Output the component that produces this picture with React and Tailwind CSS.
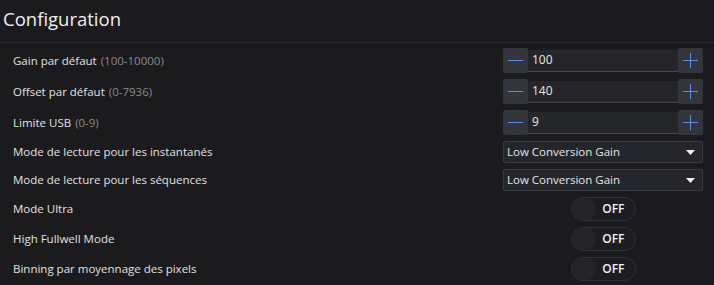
import React from "react";

const rows = [
  { label: "Gain par défaut", hint: "(100-10000)", value: "100" },
  { label: "Offset par défaut", hint: "(0-7936)", value: "140" },
  { label: "Limite USB", hint: "(0-9)", value: "9" },
];

const selects = [
  { label: "Mode de lecture pour les instantanés", value: "Low Conversion Gain" },
  { label: "Mode de lecture pour les séquences", value: "Low Conversion Gain" },
];

const toggles = ["Mode Ultra", "High Fullwell Mode", "Binning par moyennage des pixels"];

const Stepper = ({ value }) => (
  <div className="flex items-center w-[200px] h-[25px]">
    <button className="w-[25px] h-[25px] bg-[#33353c] rounded-[2px] flex items-center justify-center">
      <svg width="17" height="17" viewBox="0 0 17 17">
        <rect x="1" y="8" width="15" height="1" fill="#5b8de6" />
      </svg>
    </button>
    <div className="flex-1 h-[22px] bg-[#25262a] border-b border-[#45464c] flex items-center px-[4px] text-[12px] text-[#e8e8e8]">
      {value}
    </div>
    <button className="w-[25px] h-[25px] bg-[#33353c] rounded-[2px] flex items-center justify-center">
      <svg width="17" height="17" viewBox="0 0 17 17">
        <rect x="1" y="8" width="15" height="1" fill="#5b8de6" />
        <rect x="8" y="1" width="1" height="15" fill="#5b8de6" />
      </svg>
    </button>
  </div>
);

const Select = ({ value }) => (
  <div className="w-[200px] h-[22px] bg-[#25262b] border border-[#393a40] rounded-[2px] flex items-center justify-between pl-[3px] pr-[7px] text-[11.5px] text-[#e6e6e6]">
    <span>{value}</span>
    <svg width="9" height="5" viewBox="0 0 9 5">
      <path d="M0 0h9L4.5 5z" fill="#f0f0f0" />
    </svg>
  </div>
);

const Toggle = () => (
  <div className="w-[65px] h-[24px] rounded-full border border-[#2f3035] bg-[#1c1d20] flex items-center justify-between pr-[10px]">
    <div className="w-[24px] h-[22px] rounded-full bg-[#232428]" />
    <span className="text-[12px] font-semibold text-[#f2f2f2]">OFF</span>
  </div>
);

export default function App() {
  return (
    <div
      className="w-[714px] h-[285px] bg-[#1b1b1d] text-[#e2e2e2] overflow-hidden"
      style={{ fontFamily: '"Open Sans", "Noto Sans", sans-serif' }}
    >
      <div className="h-[43px] flex items-center pl-[3px] pb-[3px] border-b border-[#2c2c30]">
        <h1 className="text-[18.5px] text-[#f0f0f0] leading-none">Configuration</h1>
      </div>
      <div className="pl-[13px] pr-[11px] pt-[2px]">
        {rows.map((r) => (
          <div key={r.label} className="flex items-center justify-between h-[31px]">
            <div className="text-[11.5px]">
              {r.label} <span className="text-[#8a8a8d] ml-[1px]">{r.hint}</span>
            </div>
            <Stepper value={r.value} />
          </div>
        ))}
        {selects.map((s, i) => (
          <div key={i} className="flex items-center justify-between h-[28px]">
            <div className="text-[11.5px]">{s.label}</div>
            <Select value={s.value} />
          </div>
        ))}
        {toggles.map((t) => (
          <div key={t} className="flex items-center h-[30px]">
            <div className="text-[11.5px] flex-1">{t}</div>
            <div className="w-[200px] flex justify-center">
              <Toggle />
            </div>
          </div>
        ))}
      </div>
    </div>
  );
}
